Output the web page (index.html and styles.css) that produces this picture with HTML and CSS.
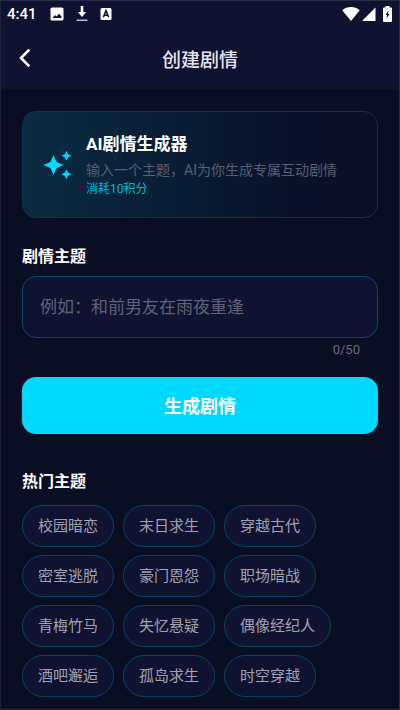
FILE: index.html
```html
<!DOCTYPE html>
<html lang="zh-CN">
<head>
<meta charset="utf-8">
<meta name="viewport" content="width=device-width, initial-scale=1">
<title>创建剧情</title>
<link rel="stylesheet" href="styles.css">
</head>
<body>
<div class="screen">
  <header class="top">
    <div class="status">
      <span class="clock">4:41</span>
      <svg class="status-icon" width="14" height="14" viewBox="0 0 14 14" aria-hidden="true"><path fill="#fff" fill-rule="evenodd" d="M2 .5h10A1.500 1.500 0 0 1 13.500 2v10a1.500 1.500 0 0 1-1.500 1.500H2A1.500 1.500 0 0 1 .5 12V2A1.500 1.500 0 0 1 2 .5zM2.500 11h9V9.500L9 6.800 6.500 9.500 5 8z"/></svg>
      <svg class="status-icon" width="12" height="16" viewBox="0 0 12 16" aria-hidden="true"><path fill="#fff" d="M4.700 0h2.600v6H10l-4 5-4-5h2.700z"/><path fill="#b9bac6" d="M.5 13.500h11v1.500H.5z"/></svg>
      <svg class="status-icon" width="12" height="14" viewBox="0 0 12 14" aria-hidden="true"><rect x=".5" y="1" width="11" height="12" rx="1.500" fill="#fff"/><path fill="none" stroke="#0f1230" stroke-width="1.500" d="M3.300 10.300 6 3.600l2.700 6.700M4.300 8.300h3.400"/></svg>
      <span class="spacer"></span>
      <svg width="18" height="14" viewBox="0 0 18 14" aria-hidden="true"><path fill="#fff" d="M9 14 .3 3.200C2.800 1.100 5.800 0 9 0s6.200 1.100 8.700 3.200z"/></svg>
      <svg class="signal" width="14" height="14" viewBox="0 0 14 14" aria-hidden="true"><path fill="#fff" d="M13.500.5V14H0z"/></svg>
      <svg class="battery" width="9" height="16" viewBox="0 0 9 16" aria-hidden="true"><path fill="#fff" d="M2.500 0h4v1.500H8a1 1 0 0 1 1 1V15a1 1 0 0 1-1 1H1a1 1 0 0 1-1-1V2.500a1 1 0 0 1 1-1h1.500z"/><path fill="#0f1230" d="M5.500 4.500 2.500 9h1.600L3.500 12.500l3-4.500H5z"/></svg>
    </div>
    <div class="appbar">
      <button class="back" type="button" aria-label="返回"><svg width="12" height="20" viewBox="0 0 12 20" aria-hidden="true"><path fill="none" stroke="#fff" stroke-width="2.600" d="M10.300 1.700 2 10l8.300 8.300"/></svg></button>
      <h1>创建剧情</h1>
    </div>
  </header>
  <main>
    <section class="promo">
      <svg class="sparkle" width="30" height="30" viewBox="0 0 30 30" aria-hidden="true"><g fill="#00d9ff"><path d="m10.500 5 3.100 6.900 6.900 3.100-6.900 3.100-3.100 6.900-3.100-6.900L.5 15l6.900-3.100z"/><path d="m23.500.8 1.600 3.400 3.400 1.600-3.400 1.600-1.600 3.400-1.600-3.400-3.400-1.600 3.400-1.600zM23.500 19.200l1.600 3.400 3.400 1.600-3.400 1.600-1.600 3.400-1.600-3.400-3.400-1.600 3.400-1.600z"/></g></svg>
      <div>
        <h2>AI剧情生成器</h2>
        <p class="desc">输入一个主题，AI为你生成专属互动剧情</p>
        <p class="cost">消耗10积分</p>
      </div>
    </section>
    <form>
      <label class="heading" for="theme">剧情主题</label>
      <input id="theme" type="text" maxlength="50" placeholder="例如：和前男友在雨夜重逢">
      <div class="counter">0/50</div>
      <button class="generate" type="button">生成剧情</button>
    </form>
    <h2 class="heading">热门主题</h2>
    <div class="chips">
      <button type="button">校园暗恋</button>
      <button type="button">末日求生</button>
      <button type="button">穿越古代</button>
      <button type="button">密室逃脱</button>
      <button type="button">豪门恩怨</button>
      <button type="button">职场暗战</button>
      <button type="button">青梅竹马</button>
      <button type="button">失忆悬疑</button>
      <button type="button">偶像经纪人</button>
      <button type="button">酒吧邂逅</button>
      <button type="button">孤岛求生</button>
      <button type="button">时空穿越</button>
    </div>
  </main>
</div>
</body>
</html>
```
FILE: styles.css
```css
* { box-sizing: border-box; }
body {
  margin: 0;
  background: #0a0e23;
  color: #fff;
  font-family: Roboto, "Noto Sans CJK SC", sans-serif;
}
h1, h2, p { margin: 0; }
button, input { font-family: inherit; }
.screen {
  min-height: 100vh;
  border: 1px solid #292c46;
  border-left-color: #1e213c;
}
.top { background: #0f1230; }
.status {
  display: flex;
  align-items: center;
  height: 26px;
  padding: 0 7px 0 6px;
}
.clock {
  width: 29px;
  margin-right: 14px;
  font-size: 15px;
  font-weight: 500;
}
.status-icon { margin-right: 12px; }
.spacer { flex: 1; }
.signal { margin-left: 2px; }
.battery { margin-left: 7px; }
.appbar {
  display: grid;
  grid-template-columns: 48px 1fr 48px;
  align-items: center;
  height: 62px;
}
.back {
  display: flex;
  justify-content: center;
  padding: 0;
  border: 0;
  background: none;
}
h1 {
  color: #e4e5ec;
  font-size: 19px;
  font-weight: 500;
  text-align: center;
}
main { padding: 22px 21px 12px; }
.promo {
  display: flex;
  align-items: center;
  gap: 13px;
  height: 107px;
  padding: 0 20px;
  border: 1px solid #0a344d;
  border-radius: 14px;
  background: linear-gradient(90deg, #092c43, #0a1229 75%, #0b0e25);
}
.promo h2 {
  font-size: 17px;
  font-weight: 700;
  line-height: 24px;
}
.desc {
  margin-top: 4px;
  color: #5a5d70;
  font-size: 14px;
  line-height: 20px;
  white-space: nowrap;
}
.cost {
  color: #00b9db;
  font-size: 12px;
  line-height: 18px;
}
form { margin: 28px 0 37px; }
.heading {
  display: block;
  font-size: 16px;
  font-weight: 700;
  line-height: 22px;
}
#theme {
  display: block;
  width: 100%;
  height: 62px;
  margin-top: 8px;
  padding: 0 17px;
  border: 1px solid #07486a;
  border-radius: 14px;
  background: #0f1230;
  color: #fff;
  font-size: 17px;
}
#theme::placeholder { color: #5f6276; }
.counter {
  margin-top: 3px;
  padding-right: 18px;
  color: #686b7b;
  font-size: 13px;
  line-height: 18px;
  text-align: right;
}
.generate {
  width: 100%;
  height: 57px;
  margin-top: 18px;
  padding: 0 0 2px;
  border: 0;
  border-radius: 14px;
  background: #00d9ff;
  color: #fff;
  font-size: 18px;
  font-weight: 700;
}
.chips {
  display: flex;
  flex-wrap: wrap;
  gap: 8px 9px;
  margin-top: 12px;
}
.chips button {
  height: 42px;
  padding: 0 15px 3px;
  border: 1px solid #074362;
  border-radius: 21px;
  background: #0f1230;
  color: #a0a2b0;
  font-size: 15px;
}
```
